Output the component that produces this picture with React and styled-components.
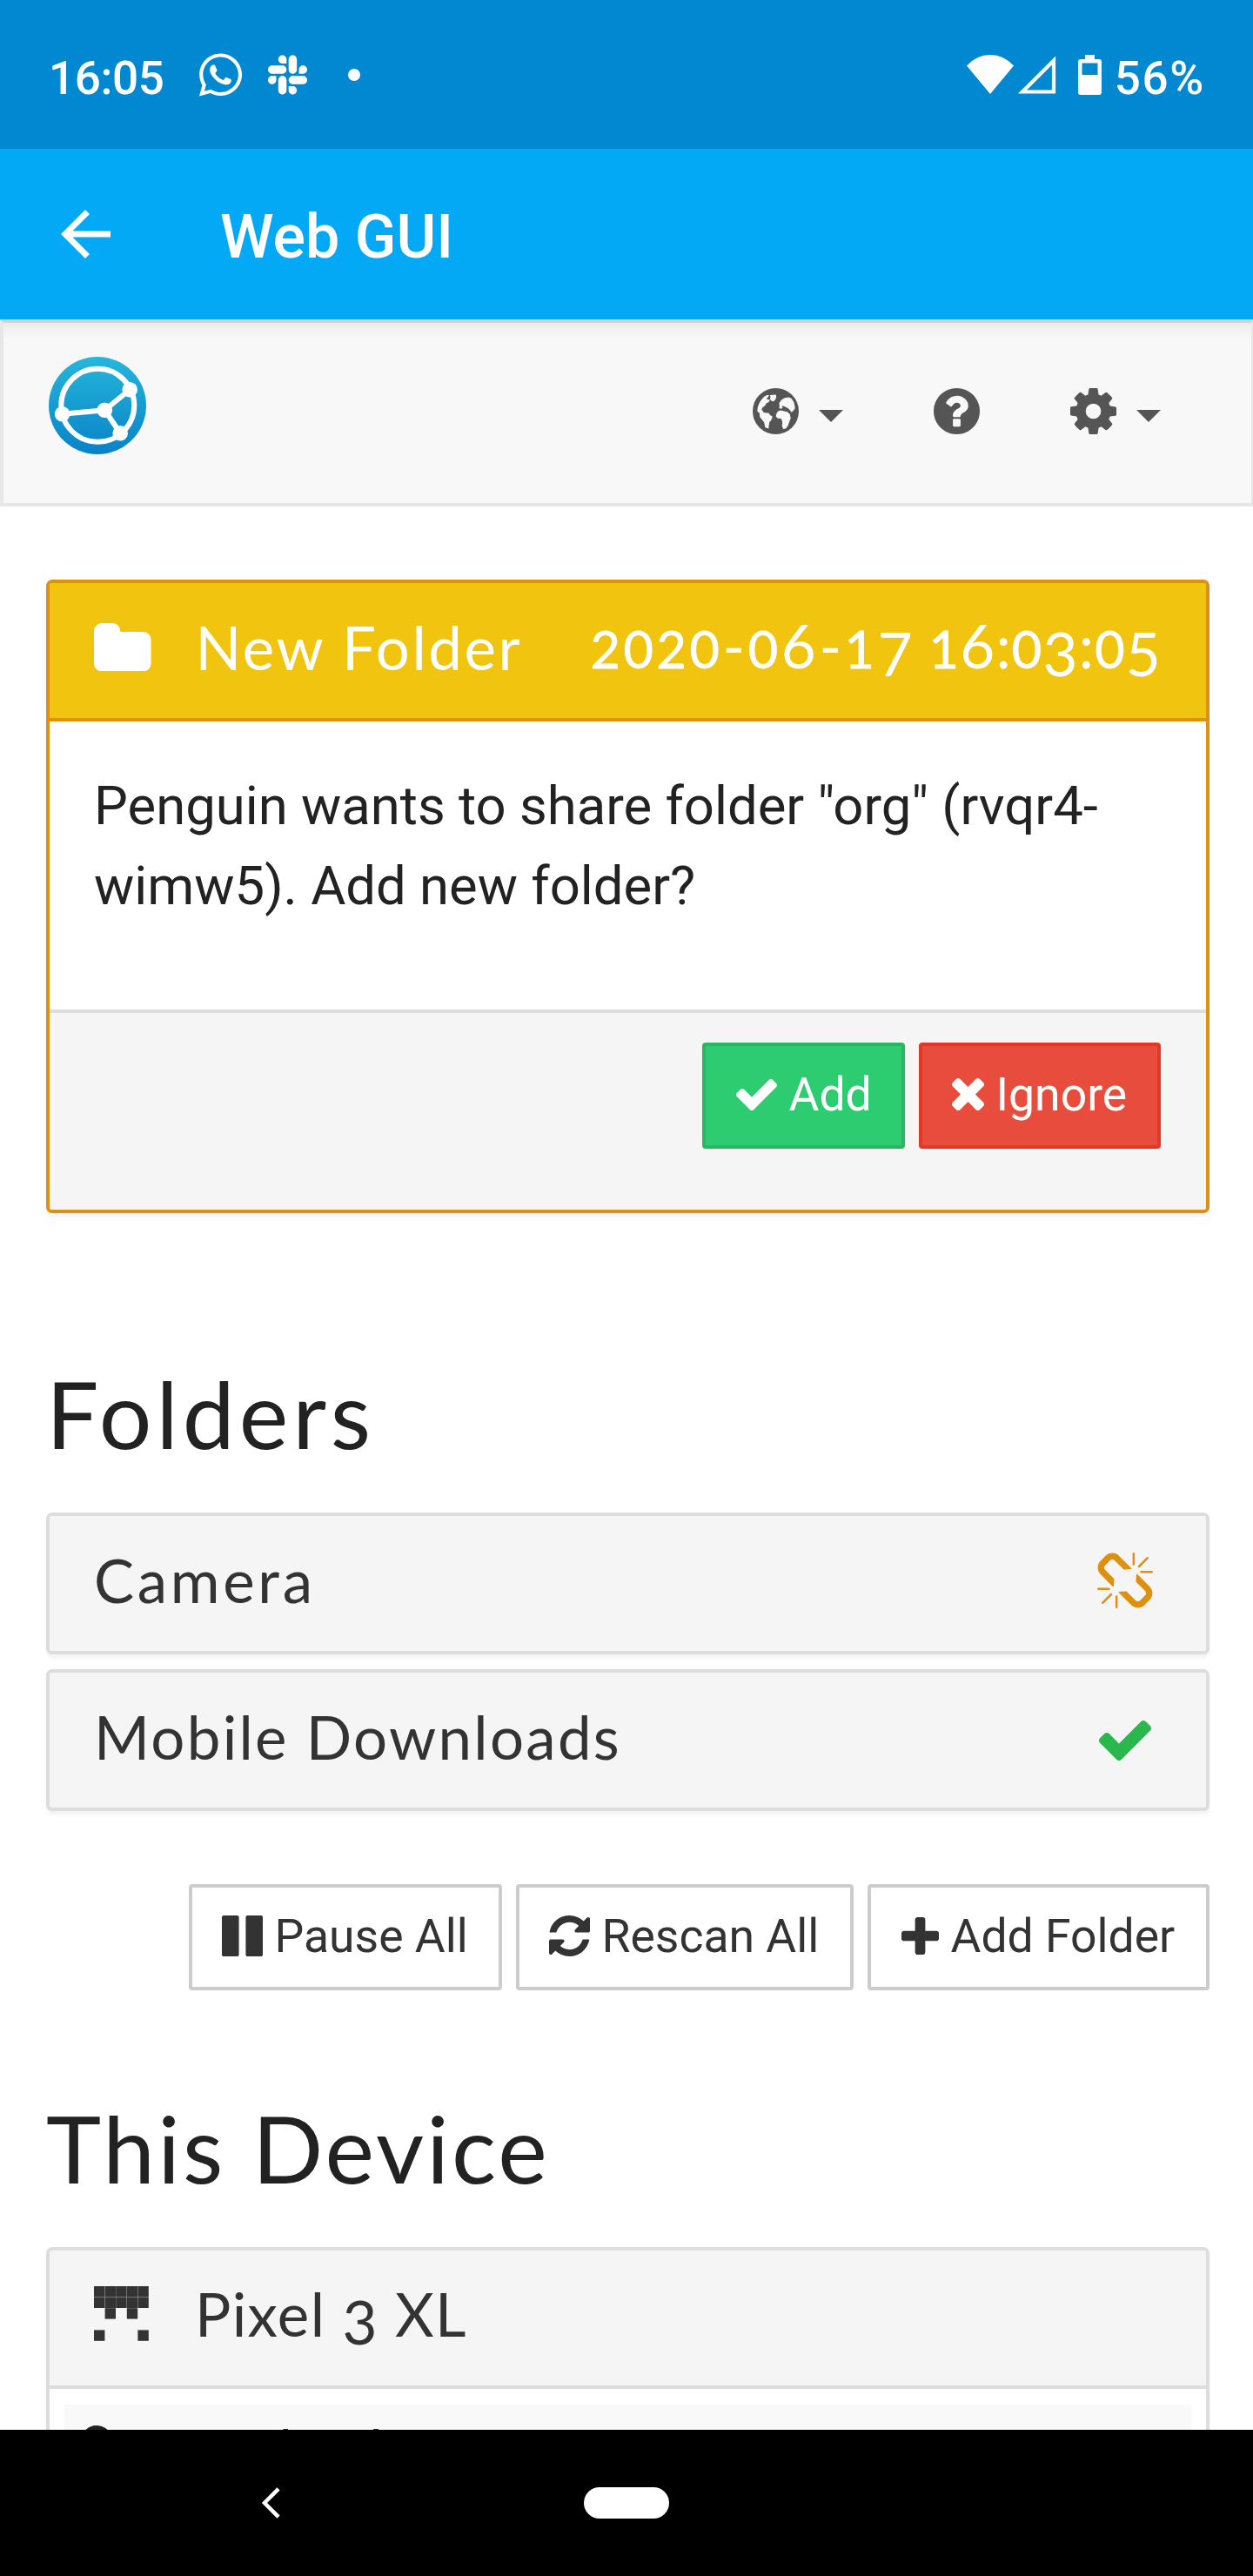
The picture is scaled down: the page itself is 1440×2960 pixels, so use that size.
import React from "react";
import styled, { createGlobalStyle } from "styled-components";
import { FaWhatsapp, FaSlack } from "react-icons/fa";

const GlobalStyle = createGlobalStyle`
  * { box-sizing: border-box; }
  body { margin: 0; background: #fff; }
`;

const Screen = styled.div`
  width: 1440px;
  height: 2960px;
  overflow: hidden;
  display: flex;
  flex-direction: column;
  background: #fff;
  color: #222;
  font-family: Roboto, "Liberation Sans", sans-serif;
`;

const StatusBar = styled.div`
  flex: none;
  height: 171px;
  display: flex;
  align-items: center;
  justify-content: space-between;
  padding: 0 55px 0 56px;
  background: #0288d1;
  color: #fff;
`;

const StatusGroup = styled.div`
  display: flex;
  align-items: center;
`;

const StatusText = styled.span`
  font-size: 53px;
  font-weight: 500;
  line-height: 60px;
  padding-top: 8px;
  letter-spacing: ${(p) => p.$spacing || 0}px;
  white-space: nowrap;
`;

const Spacer = styled.span`
  flex: none;
  width: ${(p) => p.$w}px;
`;

const Dot = styled.span`
  width: 14px;
  height: 14px;
  border-radius: 50%;
  background: #fff;
`;

const AppBar = styled.header`
  flex: none;
  height: 196px;
  display: flex;
  align-items: center;
  gap: 126px;
  padding-left: 70px;
  background: #03a9f4;
  color: #fff;
`;

const AppTitle = styled.h1`
  margin: 0;
  padding-top: 6px;
  font-size: 70px;
  font-weight: 500;
  line-height: 80px;
`;

const Navbar = styled.nav`
  flex: none;
  height: 215px;
  display: flex;
  align-items: flex-start;
  justify-content: space-between;
  padding: 39px 104px 0 52px;
  border: 4px solid #e7e7e7;
  border-right-width: 2px;
  background: linear-gradient(#ebebeb, #f3f3f3 8px, #f8f8f8 18px);
  border-top-color: #d2d2d2;
`;

const NavItems = styled.div`
  display: flex;
  align-items: center;
  padding-top: 36px;
  color: #555;
`;

const Caret = styled.span`
  width: 0;
  height: 0;
  margin: 10px 0 0 23px;
  border: 14px solid transparent;
  border-top-color: #555;
  border-bottom: 0;
`;

const Content = styled.main`
  flex: none;
  height: 2210px;
  overflow: hidden;
  padding: 84px 50px 0 53px;
`;

const Panel = styled.section`
  border: 4px solid ${(p) => (p.$warn ? "#de9110" : "#ddd")};
  border-radius: 7px;
  overflow: hidden;
  background: #fff;
  box-shadow: 0 4px 4px rgba(0, 0, 0, 0.05);
  margin-top: ${(p) => p.$gap || 0}px;
`;

const PanelHeader = styled.div`
  height: 155px;
  display: flex;
  align-items: center;
  padding: 0 ${(p) => p.$right || 51}px 8px 51px;
  background: ${(p) => (p.$warn ? "#f1c40f" : "#f5f5f5")};
  color: ${(p) => (p.$warn ? "#fff" : "#333")};
`;

const PanelTitle = styled.h3`
  margin: 0;
  padding-left: ${(p) => p.$indent || 0}px;
  flex: 1;
  font-family: Lato, "Liberation Sans", sans-serif;
  font-size: 69px;
  font-weight: 400;
  line-height: 84px;
  letter-spacing: ${(p) => p.$spacing || 0}px;
  white-space: nowrap;
`;

const Stamp = styled.time`
  font-family: Lato, "Liberation Sans", sans-serif;
  font-size: 69px;
  line-height: 84px;
  letter-spacing: 3.6px;
  white-space: nowrap;
`;

const StampTime = styled.span`
  letter-spacing: 1.2px;
  margin-left: -6px;
`;

const LowFigure = styled.span`
  font-size: 0.86em;
  -webkit-text-stroke: 0.8px currentColor;
`;

const DropFigure = styled.span`
  line-height: 0;
  vertical-align: -0.13em;
`;

const PanelBody = styled.div`
  height: 339px;
  padding: 51px;
  border-top: 4px solid #de9110;
  border-bottom: 4px solid #ddd;
  font-size: 61.6px;
  line-height: 92px;
`;

const PanelFooter = styled.div`
  height: 226px;
  display: flex;
  justify-content: flex-end;
  align-items: flex-start;
  gap: 16px;
  padding: 34px 52px 0;
  background: #f5f5f5;
`;

const buttonColors = {
  success: ["#2ecc71", "#29b765", "#fff"],
  danger: ["#e74c3c", "#e43725", "#fff"],
  plain: ["#fff", "#ccc", "#333"],
};

const Button = styled.button`
  flex: none;
  width: ${(p) => p.$w}px;
  height: 122px;
  display: flex;
  align-items: center;
  gap: 13.5px;
  padding: 0 0 3px ${(p) => p.$pad || 35}px;
  border: 4px solid ${(p) => buttonColors[p.$kind][1]};
  border-radius: 4px;
  background: ${(p) => buttonColors[p.$kind][0]};
  color: ${(p) => buttonColors[p.$kind][2]};
  font: 400 53.5px/62px Roboto, "Liberation Sans", sans-serif;
  white-space: nowrap;
`;

const ButtonRow = styled.div`
  display: flex;
  justify-content: flex-end;
  gap: 16px;
  margin-top: 84px;
`;

const Heading = styled.h2`
  margin: ${(p) => p.$top}px 0 55px;
  font-family: Lato, "Liberation Sans", sans-serif;
  font-size: 107px;
  font-weight: 400;
  line-height: 118px;
  letter-spacing: ${(p) => p.$spacing || 0}px;
  color: #222;
`;

const StatusIcon = styled.span`
  display: flex;
  color: ${(p) => p.$color};
  margin: ${(p) => p.$offset || "0"};
`;

const DeviceBody = styled.div`
  padding: 18px 17px;
  border-top: 4px solid #ddd;
`;

const DeviceRow = styled.div`
  height: 110px;
  display: flex;
  align-items: flex-start;
  gap: 13px;
  padding: 22px 12px;
  background: #f9f9f9;
  font-size: 61.6px;
  line-height: 62px;
`;

const RowIcon = styled.span`
  display: flex;
  padding-top: 2px;
`;

const SystemBar = styled.footer`
  flex: none;
  height: 168px;
  display: flex;
  align-items: center;
  gap: 349px;
  padding-left: 300px;
  background: #000;
`;

const HomePill = styled.span`
  width: 98px;
  height: 36px;
  border-radius: 18px;
  background: #fff;
`;

const GlyphSvg = styled.svg`
  flex: none;
  display: block;
  fill: currentColor;
`;

const Glyph = ({ box, w, h, d }) => (
  <GlyphSvg width={w} height={h} viewBox={box}>
    <path d={d} />
  </GlyphSvg>
);

const WhatsappIcon = styled(FaWhatsapp)`
  width: 49px;
  height: 56px;
`;

const SlackIcon = styled(FaSlack)`
  width: 45px;
  height: 52px;
`;

const CHECK =
  "M1671 566q0 40-28 68l-724 724-136 136q-28 28-68 28t-68-28l-136-136-362-362q-28-28-28-68t28-68l136-136q28-28 68-28t68 28l294 295 656-657q28-28 68-28t68 28l136 136q28 28 28 68z";
const TIMES =
  "M1490 1322q0 40-28 68l-136 136q-28 28-68 28t-68-28l-294-294-294 294q-28 28-68 28t-68-28l-136-136q-28-28-28-68t28-68l294-294-294-294q-28-28-28-68t28-68l136-136q28-28 68-28t68 28l294 294 294-294q28-28 68-28t68 28l136 136q28 28 28 68t-28 68l-294 294 294 294q28 28 28 68z";
const PLUS =
  "M1600 736v192q0 40-28 68t-68 28h-416v416q0 40-28 68t-68 28h-192q-40 0-68-28t-28-68v-416h-416q-40 0-68-28t-28-68v-192q0-40 28-68t68-28h416v-416q0-40 28-68t68-28h192q40 0 68 28t28 68v416h416q40 0 68 28t28 68z";
const PAUSE =
  "M1664 192v1408q0 26-19 45t-45 19h-512q-26 0-45-19t-19-45v-1408q0-26 19-45t45-19h512q26 0 45 19t19 45zm-896 0v1408q0 26-19 45t-45 19h-512q-26 0-45-19t-19-45v-1408q0-26 19-45t45-19h512q26 0 45 19t19 45z";
const REFRESH =
  "M1639 1056q0 5-1 7-64 268-268 434.5t-478 166.5q-146 0-282.5-55t-243.5-157l-129 129q-19 19-45 19t-45-19-19-45v-448q0-26 19-45t45-19h448q26 0 45 19t19 45-19 45l-137 137q71 66 161 102t187 36q134 0 250-65t186-179q11-17 53-117 8-23 30-23h192q13 0 22.5 9.5t9.5 22.5zm25-800v448q0 26-19 45t-45 19h-448q-26 0-45-19t-19-45 19-45l138-138q-148-137-349-137-134 0-250 65t-186 179q-11 17-53 117-8 23-30 23h-199q-13 0-22.5-9.5t-9.5-22.5v-7q65-268 270-434.5t480-166.5q146 0 284 55.5t245 156.5l130-129q19-19 45-19t45 19 19 45z";
const FOLDER =
  "M1728 608v704q0 92-66 158t-158 66h-1216q-92 0-158-66t-66-158v-960q0-92 66-158t158-66h320q92 0 158 66t66 158v32h672q92 0 158 66t66 158z";
const QUESTION =
  "M1024 1376v-192q0-14-9-23t-23-9h-192q-14 0-23 9t-9 23v192q0 14 9 23t23 9h192q14 0 23-9t9-23zm256-672q0-88-55.5-163t-138.5-116-170-41q-243 0-371 213-15 24 8 42l132 100q7 6 19 6 16 0 25-12 53-68 86-92 34-24 86-24 48 0 85.5 26t37.5 59q0 38-20 61t-68 45q-63 28-115.5 86.5t-52.5 125.5v36q0 14 9 23t23 9h192q14 0 23-9t9-23q0-19 21.5-49.5t54.5-49.5q32-18 49-28.5t46-35 44.5-48 28-60.5 12.5-81zm384 192q0 209-103 385.5t-279.5 279.5-385.5 103-385.5-103-279.5-279.5-103-385.5 103-385.5 279.5-279.5 385.5-103 385.5 103 279.5 279.5 103 385.5z";
const COG =
  "M1152 896q0-106-75-181t-181-75-181 75-75 181 75 181 181 75 181-75 75-181zm512-109v222q0 12-8 23t-20 13l-185 28q-19 54-39 91 35 50 107 138 10 12 10 25t-9 23q-27 37-99 108t-94 71q-12 0-26-9l-138-108q-44 23-91 38-16 136-29 186-7 28-36 28h-222q-14 0-24.5-8.5t-11.5-21.5l-28-184q-49-16-90-37l-141 107q-10 9-25 9-14 0-25-11-126-114-165-168-7-10-7-23 0-12 8-23 15-21 51-66.5t54-70.5q-27-50-41-99l-183-27q-13-2-21-12.5t-8-23.5v-222q0-12 8-23t19-13l186-28q14-46 39-92-40-57-107-138-10-12-10-24 0-10 9-23 26-36 98.5-107.5t94.5-71.5q13 0 26 10l138 107q44-23 91-38 16-136 29-186 7-28 36-28h222q14 0 24.5 8.5t11.5 21.5l28 184q49 16 90 37l142-107q9-9 24-9 13 0 25 10 129 119 165 170 7 8 7 22 0 12-8 23-15 21-51 66.5t-54 70.5q26 50 41 98l183 28q13 2 21 12.5t8 23.5z";
const UNLINK =
  "M503 1271l-256 256q-10 9-23 9-12 0-23-9-9-10-9-23t9-23l256-256q10-9 23-9t23 9q9 10 9 23t-9 23zm169 41v320q0 14-9 23t-23 9-23-9-9-23v-320q0-14 9-23t23-9 23 9 9 23zm-224-224q0 14-9 23t-23 9h-320q-14 0-23-9t-9-23 9-23 23-9h320q14 0 23 9t9 23zm1264 128q0 120-85 203l-147 146q-83 83-203 83-121 0-204-85l-334-335q-21-21-42-56l239-18 273 274q28 28 68 27.5t68-27.5l147-146q28-28 28-67 0-40-28-68l-274-275 18-239q35 21 56 42l336 336q84 86 84 204zm-617-724l-239 18-273-274q-28-28-68-28-39 0-68 27l-147 146q-28 28-28 67 0 40 28 68l274 274-18 240q-35-21-56-42l-336-336q-84-86-84-204 0-120 85-203l147-146q83-83 203-83 121 0 204 85l334 335q21 21 42 56zm633 84q0 14-9 23t-23 9h-320q-14 0-23-9t-9-23 9-23 23-9h320q14 0 23 9t9 23zm-544-544v320q0 14-9 23t-23 9-23-9-9-23v-320q0-14 9-23t23-9 23 9 9 23zm407 151l-256 256q-11 9-23 9t-23-9q-9-10-9-23t9-23l256-256q10-9 23-9t23 9q9 10 9 23t-9 23z";
const CLOUD_DOWN =
  "M1216 928q0-14-9-23t-23-9h-224v-352q0-13-9.5-22.5t-22.5-9.5h-192q-13 0-22.5 9.5t-9.5 22.5v352h-224q-13 0-22.5 9.5t-9.5 22.5q0 14 9 23l352 352q9 9 23 9t23-9l351-351q10-12 10-24zm640 224q0 159-112.5 271.5t-271.5 112.5h-1088q-185 0-316.5-131.5t-131.5-316.5q0-130 70-240t188-165q-2-30-2-43 0-212 150-362t362-150q156 0 285.5 87t188.5 231q71-62 166-62 106 0 181 75t75 181q0 76-41 138 130 31 213.5 135.5t83.5 238.5z";

const SyncthingLogo = () => (
  <svg width="112" height="112" viewBox="0 0 112 112">
    <defs>
      <linearGradient id="logo" x1="0" y1="0" x2="0" y2="1">
        <stop offset="0" stopColor="#26b6db" />
        <stop offset="1" stopColor="#0882c8" />
      </linearGradient>
    </defs>
    <circle cx="56" cy="56" r="56" fill="url(#logo)" />
    <g fill="none" stroke="#fff" strokeWidth="6">
      <circle cx="56.3" cy="55.8" r="42" />
      <path d="M93.2 37.7L64.3 61.3L15.6 65.7M64.3 61.3L82.2 87.7" />
    </g>
    <g fill="#fff">
      <circle cx="93.2" cy="37.7" r="8.8" />
      <circle cx="15.6" cy="65.7" r="8.8" />
      <circle cx="82.2" cy="87.7" r="8.8" />
      <circle cx="64.3" cy="61.3" r="8.8" />
    </g>
  </svg>
);

const Globe = () => (
  <svg width="53" height="53" viewBox="27 46 160 160">
    <circle cx="107" cy="126" r="80" fill="#555" />
    <g fill="#f8f8f8">
      <path d="M66 76l10-6 8 0-3 7-5 4 2 5 9-1-4 9-8 4-6 10-8 5-3 8 5 5 1 9-7-3-9-1-5-6q1-27 23-49z" />
      <path d="M87 70l21-1 1 9-4 9-6 5-8-2-4-8 2-5z" />
      <path d="M51 130l10-1 13 3 8 0 5 7 9 6-5 13-6 6-3 22-12-4-3-17-8-10-7-9-1-9z" />
      <path d="M119 97l8-10 11-7 15-2 9 4 8 13 3 14 1 8-7 8-5 5-6-8-6-6-8-4-9-4-5 0 3 7-3 2-9-1 1-9z" />
      <path d="M108 138l6-11 10-4 12 3 11 2 9 8 3 14-5 13-4 12-8 11-9 2-4-10 1-15-4-11-12-1-6-6z" />
    </g>
  </svg>
);

const DeviceIcon = () => {
  const rows = ["11111", "11111", "01010", "00000", "10001"];
  return (
    <svg width="64" height="64" viewBox="0 0 5.08 5.08" fill="#333">
      {rows.flatMap((row, y) =>
        [...row].map((c, x) => (c === "1" ? <rect key={`${x}-${y}`} x={x} y={y} width="0.985" height="0.985" /> : null))
      )}
    </svg>
  );
};

const OldStyle = ({ text }) =>
  [...text].map((c, i) => {
    if ("012".includes(c)) return <LowFigure key={i}>{c}</LowFigure>;
    if ("34579".includes(c)) return <DropFigure key={i}>{c}</DropFigure>;
    return c;
  });

export default function App() {
  return (
    <Screen>
      <GlobalStyle />
      <StatusBar>
        <StatusGroup>
          <StatusText $spacing={-0.4}>16:05</StatusText>
          <Spacer $w={41} />
          <WhatsappIcon />
          <Spacer $w={30} />
          <SlackIcon />
          <Spacer $w={47} />
          <Dot />
        </StatusGroup>
        <StatusGroup>
          <svg width="54" height="45" viewBox="0 0 54 45">
            <path d="M0 12.5Q11.500 0 27 0T54 12.500L27 45z" fill="#fff" />
          </svg>
          <Spacer $w={4} />
          <svg width="45" height="45" viewBox="0 0 45 45">
            <path d="M42 6.500V42.500H6z" fill="none" stroke="#fff" strokeWidth="4.200" />
          </svg>
          <Spacer $w={25} />
          <svg width="27" height="46" viewBox="0 0 27 46">
            <path fillRule="evenodd" fill="#fff" d="M8 0h11v5h5q3 0 3 3v35q0 3-3 3H3q-3 0-3-3V8q0-3 3-3h5zM4.500 9.500v13.500h18v-13.500z" />
          </svg>
          <Spacer $w={15} />
          <StatusText $spacing={1.7}>56%</StatusText>
        </StatusGroup>
      </StatusBar>
      <AppBar>
        <svg width="57" height="56" viewBox="0 0 57 56">
          <path d="M30.500 2.500L5 28L30.500 53.500M4 28H57" fill="none" stroke="#fff" strokeWidth="7" />
        </svg>
        <AppTitle>Web GUI</AppTitle>
      </AppBar>
      <Navbar>
        <SyncthingLogo />
        <NavItems>
          <Globe />
          <Caret />
          <Spacer $w={104} />
          <Glyph box="128 128 1536 1536" w={53} h={53} d={QUESTION} />
          <Spacer $w={104} />
          <Glyph box="128 128 1536 1536" w={53} h={53} d={COG} />
          <Caret />
        </NavItems>
      </Navbar>
      <Content>
        <Panel $warn>
          <PanelHeader $warn>
            <Glyph box="64 128 1664 1408" w={65.5} h={55.5} d={FOLDER} />
            <PanelTitle $indent={51} $spacing={2.6}>New Folder</PanelTitle>
            <Stamp>
              <OldStyle text="2020-06-17" />{" "}
              <StampTime>
                <OldStyle text="16:03:05" />
              </StampTime>
            </Stamp>
          </PanelHeader>
          <PanelBody>Penguin wants to share folder "org" (rvqr4-wimw5). Add new folder?</PanelBody>
          <PanelFooter>
            <Button $kind="success" $w={233}>
              <Glyph box="121 334 1550 1188" w={47} h={36} d={CHECK} />
              Add
            </Button>
            <Button $kind="danger" $w={278} $pad={34}>
              <Glyph box="302 366 1188 1188" w={37} h={37} d={TIMES} />
              Ignore
            </Button>
          </PanelFooter>
        </Panel>

        <Heading $top={171} $spacing={5}>Folders</Heading>
        <Panel>
          <PanelHeader $right={61}>
            <PanelTitle $spacing={3.7}>Camera</PanelTitle>
            <StatusIcon $color="#de9110">
              <Glyph box="64 0 1664 1664" w={64} h={64} d={UNLINK} />
            </StatusIcon>
          </PanelHeader>
        </Panel>
        <Panel $gap={17}>
          <PanelHeader $right={61}>
            <PanelTitle $spacing={2.3}>Mobile Downloads</PanelTitle>
            <StatusIcon $color="#29b74e" $offset="8px 2px 0 0">
              <Glyph box="121 334 1550 1188" w={60} h={46} d={CHECK} />
            </StatusIcon>
          </PanelHeader>
        </Panel>
        <ButtonRow>
          <Button $kind="plain" $w={360} $pad={34}>
            <Glyph box="128 128 1536 1536" w={47} h={47} d={PAUSE} />
            Pause All
          </Button>
          <Button $kind="plain" $w={388} $pad={34}>
            <Glyph box="128 128 1536 1536" w={47} h={47} d={REFRESH} />
            Rescan All
          </Button>
          <Button $kind="plain" $w={393} $pad={35}>
            <Glyph box="192 128 1408 1408" w={43} h={43} d={PLUS} />
            Add Folder
          </Button>
        </ButtonRow>

        <Heading $top={121.5} $spacing={3.1}>This Device</Heading>
        <Panel>
          <PanelHeader>
            <DeviceIcon />
            <PanelTitle $indent={52} $spacing={1.4}>
              Pixel <OldStyle text="3" /> XL
            </PanelTitle>
          </PanelHeader>
          <DeviceBody>
            <DeviceRow>
              <RowIcon>
                <Glyph box="0 128 1856 1408" w={66} h={50} d={CLOUD_DOWN} />
              </RowIcon>
              Download Rate
            </DeviceRow>
          </DeviceBody>
        </Panel>
      </Content>
      <SystemBar>
        <svg width="22" height="36" viewBox="0 0 22 36">
          <path d="M20 1.800L4 18L20 34.200" fill="none" stroke="#fff" strokeWidth="4.500" />
        </svg>
        <HomePill />
      </SystemBar>
    </Screen>
  );
}
